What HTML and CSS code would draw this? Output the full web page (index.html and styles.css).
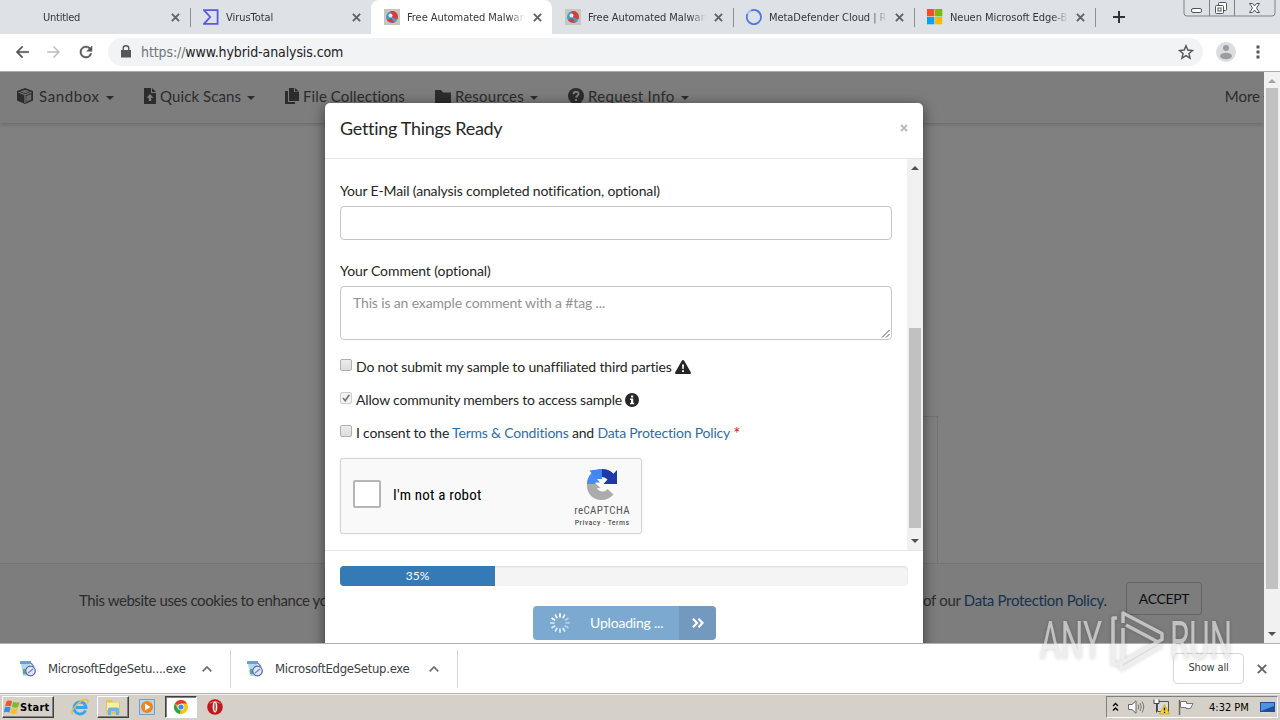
FILE: index.html
```html
<!DOCTYPE html>
<html lang="en">
<head>
  <meta charset="UTF-8">
  <title>Free Automated Malware Analysis Service</title>
  <link rel="stylesheet" href="styles.css">
</head>
<body>

  <!-- tabs -->
  <div class="tabstrip">
    <div class="tab blank">
      <span class="favicon"></span>
      <span class="tab-title">Untitled</span>
      <svg class="tab-close" viewBox="0 0 8 8"><path d="M.8.8l6.4 6.4M7.2.8L.8 7.2"/></svg>
    </div>
    <div class="tab sep">
      <svg class="favicon" viewBox="0 0 16 16"><path d="M1 1.2h13.6v13.6H1L7.2 8z" fill="none" stroke="#5a5ae0" stroke-width="1.8"/></svg>
      <span class="tab-title">VirusTotal</span>
      <svg class="tab-close" viewBox="0 0 8 8"><path d="M.8.8l6.4 6.4M7.2.8L.8 7.2"/></svg>
    </div>
    <div class="tab active">
      <svg class="favicon" viewBox="0 0 16 16"><use href="#ha"/></svg>
      <span class="tab-title">Free Automated Malware</span>
      <svg class="tab-close" viewBox="0 0 8 8"><path d="M.8.8l6.4 6.4M7.2.8L.8 7.2"/></svg>
    </div>
    <div class="tab">
      <svg class="favicon" viewBox="0 0 16 16"><use href="#ha"/></svg>
      <span class="tab-title">Free Automated Malware</span>
      <svg class="tab-close" viewBox="0 0 8 8"><path d="M.8.8l6.4 6.4M7.2.8L.8 7.2"/></svg>
    </div>
    <div class="tab sep">
      <svg class="favicon" viewBox="0 0 16 16"><path d="M5 1.6A7.1 7.1 0 1 1 1.5 5" fill="none" stroke="#4a78e0" stroke-width="1.8"/><path d="M1.5 5A7.1 7.1 0 0 1 5 1.6" fill="none" stroke="#9bb6ee" stroke-width="1.6"/></svg>
      <span class="tab-title">MetaDefender Cloud | Real</span>
      <svg class="tab-close" viewBox="0 0 8 8"><path d="M.8.8l6.4 6.4M7.2.8L.8 7.2"/></svg>
    </div>
    <div class="tab sep">
      <svg class="favicon" viewBox="0 0 16 16"><path fill="#f25022" d="M0 0h7.3v7.3H0z"/><path fill="#7fba00" d="M8 0h7.3v7.3H8z"/><path fill="#00a4ef" d="M0 8h7.3v7.3H0z"/><path fill="#ffb900" d="M8 8h7.3v7.3H8z"/></svg>
      <span class="tab-title">Neuen Microsoft Edge-Browser</span>
      <svg class="tab-close" viewBox="0 0 8 8"><path d="M.8.8l6.4 6.4M7.2.8L.8 7.2"/></svg>
    </div>
    <div class="newtab">
      <svg width="12" height="12" viewBox="0 0 12 12"><path d="M6 0v12M0 6h12" stroke="#2f3338" stroke-width="2"/></svg>
    </div>
    <svg class="winbtns" width="94" height="18" viewBox="0 0 94 18">
      <path d="M1 0v13q0 3 3 3h85q3 0 3-3V0M26.500 0v16M51.500 0v16" fill="none" stroke="#7d828a"/>
      <g fill="#fff" stroke="#50555c">
        <rect x="8.500" y="8.500" width="10" height="4" rx="1.500"/>
        <rect x="35.500" y="2.500" width="8" height="8" rx="1"/>
        <rect x="32.500" y="5.500" width="8" height="8" rx="1"/>
        <rect x="35" y="8" width="3" height="3"/>
        <path d="M66.500 3.500h3l2 2.500 2-2.500h3l-3 4.500 3 4.500h-3l-2-2.500-2 2.500h-3l3-4.500z"/>
      </g>
    </svg>
  </div>

  <!-- address bar -->
  <div class="toolbar">
    <svg class="nav-btn" viewBox="0 0 24 24"><path d="M21 11H7.800l5.600-5.600L12 4l-8 8 8 8 1.400-1.400L7.800 13H21z" fill="#54575b" stroke="#54575b" stroke-width=".5"/></svg>
    <svg class="nav-btn" viewBox="0 0 24 24"><path d="M3 11h13.200l-5.600-5.600L12 4l8 8-8 8-1.400-1.400 5.600-5.600H3z" fill="#bcbec1"/></svg>
    <svg class="nav-btn" viewBox="0 0 24 24"><path d="M17.600 6.400A8 8 0 1 0 19.700 14h-2.100A6 6 0 1 1 12 6c1.700 0 3.100.7 4.200 1.800L13 11h7V4z" fill="#54575b" stroke="#54575b" stroke-width=".7"/></svg>
    <div class="omnibox">
      <svg class="lock" width="10" height="13" viewBox="0 0 10 13"><path d="M0 5h10v7.500H0z" fill="#54575b"/><path d="M2.200 5.500V3.300a2.800 2.600 0 0 1 5.600 0v2.200" fill="none" stroke="#54575b" stroke-width="1.400"/></svg>
      <span class="url"><i>https://</i>www.hybrid-analysis.com</span>
      <svg class="star" width="16" height="16" viewBox="0 0 24 24"><path d="M12 2.500l2.700 6.600 7.100.6-5.400 4.600 1.700 7-6.100-3.800-6.100 3.800 1.700-7L2.200 9.700l7.100-.6z" fill="none" stroke="#54575b" stroke-width="2.100"/></svg>
    </div>
    <svg class="avatar" width="20" height="20" viewBox="0 0 20 20"><circle cx="10" cy="10" r="10" fill="#dcdddf"/><circle cx="10" cy="6" r="3" fill="#9c9da0"/><ellipse cx="10" cy="14" rx="6" ry="3.200" fill="#9c9da0"/></svg>
    <svg class="dots" width="4" height="14" viewBox="0 0 4 14"><path d="M.5.500h3v3h-3zM.5 5.500h3v3h-3zM.5 10.500h3v3h-3z" fill="#54575b"/></svg>
  </div>

  <div class="viewport">
    <div class="page">
      <nav class="site-nav">
        <a class="n1"><svg width="16" height="16" viewBox="0 0 16 16"><path d="M8 0l8 3v9.500L8 16l-8-3.500V3z" fill="#2c2c2c"/><path d="M1.500 4.200L8 6.700l6.500-2.500M8 6.700V15" stroke="#7a7a7a" fill="none" stroke-width="1.200"/><path d="M3 3.400L8 1.700l5 1.700-5 1.800zM9.300 8l4.900-2v5.800L9.300 14z" fill="#6a6a6a"/></svg><span>Sandbox</span><b class="caret"></b></a>
        <a class="n2"><svg width="12" height="16" viewBox="0 0 12 16"><path d="M0 0h7v5h5v11H0zM8 0l4 4H8z" fill="#2c2c2c"/><path d="M6 6l3.500 3.800H7.200V13H4.800V9.800H2.500z" fill="#7e7e7e"/></svg><span>Quick Scans</span><b class="caret"></b></a>
        <a class="n3"><svg width="14" height="16" viewBox="0 0 14 16"><path d="M4 0h5v4h5v9H4zM10 0l4 3.400h-4zM0 3h3v11h7v2H0z" fill="#2c2c2c"/></svg><span>File Collections</span></a>
        <a class="n4"><svg width="16" height="13" viewBox="0 0 16 13"><path d="M0 0h6l2 2.500h8V13H0z" fill="#2c2c2c"/></svg><span>Resources</span><b class="caret"></b></a>
        <a class="n5"><svg width="16" height="16" viewBox="0 0 16 16"><circle cx="8" cy="8" r="8" fill="#2c2c2c"/><path d="M5.500 6.200C5.600 2.800 10.700 3 10.500 6c-.1 1.700-2.300 1.800-2.400 3.600M8 11v2" stroke="#7e7e7e" stroke-width="1.900" fill="none"/></svg><span>Request Info</span><b class="caret"></b></a>
        <a class="more"><span>More</span><b class="caret"></b></a>
      </nav>
      <div class="site-main"><div class="panel"></div></div>
      <div class="cookies">
        <span class="ck1">This website uses cookies to enhance your</span>
        <span class="ck2">of our <a>Data Protection Policy</a>.</span>
        <span class="accept">ACCEPT</span>
      </div>

      <div class="modal">
        <div class="modal-header">
          <h4>Getting Things Ready</h4>
          <svg width="8" height="8" viewBox="0 0 8 8"><path d="M1 1l6 6M7 1L1 7" stroke="#bdbdbd" stroke-width="2"/></svg>
        </div>
        <div class="modal-body">
          <form class="form">
            <label class="l1">Your E-Mail (analysis completed notification, optional)</label>
            <div class="input"></div>
            <label class="l2">Your Comment (optional)</label>
            <div class="input textarea"><span>This is an example comment with a #tag ...</span>
              <svg width="9" height="9" viewBox="0 0 9 9"><path d="M1 8.500L8.500 1M5 8.500L8.500 5" stroke="#555"/></svg>
            </div>
            <div class="check"><i class="box"></i><span class="c1">Do not submit my sample to unaffiliated third parties</span>
              <svg class="warn" width="16" height="14" viewBox="0 0 16 14"><path d="M8 0q.8 0 1.200.8l6.600 11.400Q16.300 14 15 14H1q-1.300 0-.8-1.800L6.800.8Q7.200 0 8 0z" fill="#262626"/><path d="M7 4.500h2L8.700 9H7.300zM7 10.300h2V12H7z" fill="#fff"/></svg>
            </div>
            <div class="check"><i class="box on"><svg width="8" height="8" viewBox="0 0 8 8"><path d="M1 4l2.200 2.700L7.300.8" stroke="#777" stroke-width="1.700" fill="none"/></svg></i><span class="c2">Allow community members to access sample</span>
              <svg class="info" width="14" height="14" viewBox="0 0 14 14"><circle cx="7" cy="7" r="7" fill="#262626"/><path d="M6 2.500h2.200v2H6zM5 5.600h3.200v4.200h1v1.500H5V9.800h1V7H5z" fill="#fff"/></svg>
            </div>
            <div class="check"><i class="box"></i><span class="c3">I consent to the <a>Terms &amp; Conditions</a> and <a>Data Protection Policy</a> <em>*</em></span></div>
            <div class="captcha">
              <i class="captcha-box"></i>
              <span class="robot">I'm not a robot</span>
              <div class="captcha-logo">
                <svg width="32" height="32" viewBox="0 0 32 32">
                  <path d="M1 16C1 8 7 1 16 1v8q-3 0-5 2l3 3.500H9.500V16z" fill="#4a8af4"/>
                  <path d="M3.500 2.500L16 1v10H10z" fill="#4285f4"/>
                  <path d="M16 1c5 0 9 2 11.500 4.800L31 2v14H17.500l4-4.500Q19.500 9 16 9z" fill="#1c3aa9"/>
                  <path d="M1 16v2c0 8 6.500 14 14.500 14 5 0 9-2 12-5.500l-6-5.500c-3 4-9.500 3-10.500-1h3.500L10 16z" fill="#ababab"/>
                </svg>
                <span class="rc">reCAPTCHA</span>
                <span class="pt">Privacy - Terms</span>
              </div>
            </div>
          </form>
          <div class="scroll inner"><b class="up"></b><b class="thumb"></b><b class="down"></b></div>
        </div>
        <div class="modal-footer">
          <div class="progress"><div class="bar" style="width:155px"><span>35%</span></div></div>
          <div class="upload">
            <div class="upload-main">
              <svg width="20" height="20" viewBox="-10 -10 20 20" stroke="#fff" stroke-width="1.700">
                <path d="M0-5.500V-9.800M2.800-4.800L4.900-8.500M-2.800-4.800L-4.900-8.500M-4.800-2.800L-8.500-4.900"/>
                <path d="M-5.500 0H-9.800M-4.800 2.800L-8.500 4.900M-2.800 4.800L-4.900 8.500M0 5.500V9.800M2.800 4.800L4.900 8.500" opacity=".8"/>
                <path d="M4.800-2.800L8.500-4.900M5.500 0H9.800M4.800 2.800L8.500 4.900" opacity=".5"/>
              </svg>
              <span>Uploading ...</span>
            </div>
            <div class="upload-next"><svg width="12" height="10" viewBox="0 0 12 10"><path d="M1 .8L5 5 1 9.200M6.500.8l4 4.200-4 4.200" stroke="#fff" stroke-width="2.200" fill="none"/></svg></div>
          </div>
        </div>
      </div>
    </div>
    <div class="scroll outer"><b class="up"></b><b class="thumb"></b><b class="down"></b></div>
  </div>

  <!-- downloads -->
  <div class="downloads">
    <div class="dl d1"><svg width="18" height="18" viewBox="0 0 18 18"><use href="#setup"/></svg><span>MicrosoftEdgeSetu....exe</span><svg class="chev" width="10" height="6" viewBox="0 0 10 6"><path d="M.7 5.300L5 1l4.300 4.300" stroke="#6b6f74" stroke-width="1.700" fill="none"/></svg></div>
    <div class="dl d2"><svg width="18" height="18" viewBox="0 0 18 18"><use href="#setup"/></svg><span>MicrosoftEdgeSetup.exe</span><svg class="chev" width="10" height="6" viewBox="0 0 10 6"><path d="M.7 5.300L5 1l4.300 4.300" stroke="#6b6f74" stroke-width="1.700" fill="none"/></svg></div>
    <div class="showall"><span>Show all</span></div>
    <svg class="dl-close" width="10" height="10" viewBox="0 0 10 10"><path d="M.8.800l8.400 8.400M9.200.800L.8 9.200" stroke="#5f6368" stroke-width="1.800"/></svg>
  </div>

  <!-- taskbar -->
  <div class="taskbar">
    <div class="start">
      <svg width="16" height="16" viewBox="0 0 16 16"><path d="M2.500 2.500Q5 .5 8 2.300L6.800 7.500Q4 6 1 7.500z" fill="#e8582a"/><path d="M9 2.700q3 1.500 6.500.300L14 8.300q-3 1.200-6.200-.5z" fill="#7db928"/><path d="M.8 8.500Q4 7 6.600 8.500L5.400 13.500Q2.500 12-.2 13.500z" fill="#3c8de0"/><path d="M7.600 8.900q3 1.500 6.200.400l-1.400 5q-3 1.200-6-.4z" fill="#fbbf1f"/></svg>
      <span>Start</span>
    </div>
    <svg class="ie" width="18" height="18" viewBox="0 0 18 18"><path d="M14.500 12.500A6 6 0 1 1 15 9.500H5" fill="none" stroke="#39a5e6" stroke-width="2.800"/><path d="M1.500 16C-1 12 11-1 16.500 2c1 .8.500 2-.2 3.300" fill="none" stroke="#edbd3b" stroke-width="1.400"/></svg>
    <div class="task raised"><svg width="18" height="18" viewBox="0 0 18 18"><path d="M2 2h6l1.500 2H16v12H2z" fill="#e6c552"/><path d="M3 4.500h12V12H3z" fill="#fbeeaa"/><path d="M4 17v-6q0-1.500 1.500-1.500h8Q15 9.500 15 11v6h-3v-4H7v4z" fill="#69b5e6"/></svg></div>
    <svg class="wmp" width="16" height="16" viewBox="0 0 16 16"><path d="M.5.500h15v15H.5z" fill="#b9d7f0" stroke="#6aa0cf"/><circle cx="8" cy="8" r="6" fill="#f08518"/><path d="M6 4.500L11.500 8 6 11.500z" fill="#fff"/></svg>
    <div class="task pressed"><svg width="14" height="14" viewBox="0 0 14 14"><circle cx="7" cy="7" r="7" fill="#f9c513"/><path d="M7 7L.9 3.500A7 7 0 0 1 13.100 3.500H7z" fill="#e23b2e"/><path d="M7 7l-1 7A7 7 0 0 1 .9 3.500L4 9z" fill="#2ba24c"/><circle cx="7" cy="7" r="3.300" fill="#fff"/><circle cx="7" cy="7" r="2.600" fill="#4285f4"/></svg></div>
    <svg class="opera" width="16" height="16" viewBox="0 0 16 16"><circle cx="8" cy="8" r="7.800" fill="#c3161c"/><path d="M2 5a7 6 0 0 1 12 0q-6-3-12 0z" fill="#e56a6a"/><ellipse cx="8" cy="8" rx="2.400" ry="5.500" fill="#f4f0f0"/><ellipse cx="8" cy="8" rx=".7" ry="4.200" fill="#a03034"/></svg>
    <div class="tray">
      <svg width="7" height="10" viewBox="0 0 7 10"><path d="M1 4l2.500-2.500L6 4M1 8.500L3.500 6 6 8.500" stroke="#000" stroke-width="1.400" fill="none"/></svg>
      <svg class="vol" width="17" height="14" viewBox="0 0 17 14"><path d="M.5 4.500H4L8 .800v12.400L4 9.500H.5z" fill="#fff" stroke="#666"/><path d="M10 4.500q1.500 2.500 0 5M12 3q2.500 4 0 8M14 1.500q3.500 5.500 0 11" stroke="#777" fill="none"/></svg>
      <svg class="net" width="17" height="16" viewBox="0 0 17 16"><path d="M4.500 2.500h11v10h-11z" fill="#d8dcdc" stroke="#555"/><path d="M1 .5v4h5v-4M3.500 4.500v9" stroke="#444" fill="#fff"/><path d="M11.500 5.500L16.500 15h-10z" fill="#ffd91c" stroke="#b89600" stroke-width=".6"/><path d="M11.500 8.500v3M11.500 12.700V14" stroke="#222" stroke-width="1.400"/></svg>
      <svg class="flag" width="16" height="15" viewBox="0 0 16 15"><path d="M1.500 0v15" stroke="#666" stroke-width="1.400"/><path d="M2.500 1.500h6v2h6.500L12.500 8.500H8v-1H2.500z" fill="#fff" stroke="#777"/></svg>
      <span>4:32 PM</span>
      <svg class="desk" width="15" height="13" viewBox="0 0 15 13"><path d="M0 1h15v10H0z" fill="#1c4f9e"/><path d="M1 2h13v3L1 10z" fill="#4f92dd"/><path d="M2 11h9v1.500H2z" fill="#d9d9d9"/></svg>
    </div>
  </div>

  <svg class="watermark" width="200" height="70" viewBox="0 0 200 70">
    <g class="wm-text"><text x="4" y="51" textLength="62" lengthAdjust="spacingAndGlyphs">ANY</text><text x="134" y="51" textLength="62" lengthAdjust="spacingAndGlyphs">RUN</text></g>
    <path d="M81 10h-4v46h6M87 15V5l39 20.500v6L87 54V20M90 17l32 17M85 53v8l41-24" class="wm-line"/>
  </svg>

  <svg class="defs">
    <symbol id="ha" viewBox="0 0 16 16"><path d="M0 0h16v16H0z" fill="#c9c6c0"/><circle cx="8" cy="8" r="6" fill="#3f9fcb"/><path d="M7 2a6 6 0 0 1 6.500 8Q9 10 6 5z" fill="#dd3a35"/><path d="M3 11q3 3.500 7.500 2.500L7 9z" fill="#d93a40"/><circle cx="6.500" cy="6.500" r="2" fill="#d8f0fa"/></symbol>
    <symbol id="setup" viewBox="0 0 18 18"><path d="M1 1h11v3H1z" fill="#6f9fcb"/><path d="M2 4h9l1 12H4z" fill="#b5d5ec"/><path d="M4 9h5v5H4z" fill="#5fa88a"/><circle cx="11.500" cy="11" r="4.800" fill="#dfe5f5" stroke="#5468a8" stroke-width="1.200"/><path d="M9 13l5-4M12 3l3 4" stroke="#6f86c8" stroke-width="1.300"/></symbol>
  </svg>
</body>
</html>
```
FILE: styles.css
```css
* {
  box-sizing: border-box;
}

body {
  margin: 0;
  width: 1280px;
  height: 720px;
  overflow: hidden;
  position: relative;
  display: flex;
  flex-direction: column;
  font-family: "DejaVu Sans Condensed", "DejaVu Sans", sans-serif;
  font-stretch: condensed;
  background: #fff;
}

svg {
  flex: none;
}

.defs {
  display: none;
}

span, label {
  white-space: nowrap;
}

/* tab strip */
.tabstrip {
  height: 34px;
  flex: none;
  background: #dee1e6;
  display: flex;
  padding-left: 9px;
}

.tab {
  width: 181px;
  height: 34px;
  flex: none;
  display: flex;
  align-items: center;
  padding-left: 13px;
  position: relative;
}

.tab.active {
  background: #fff;
  border-radius: 8px 8px 0 0;
}

.tab.sep::before,
.newtab::before {
  content: "";
  position: absolute;
  left: 0;
  top: 8px;
  width: 1px;
  height: 19px;
  background: #8b8f96;
}

.favicon {
  width: 16px;
  height: 16px;
  flex: none;
}

.tab-title {
  margin-left: 7px;
  width: 118px;
  overflow: hidden;
  font-size: 11px;
  letter-spacing: -0.05px;
  color: #33363a;
  -webkit-mask-image: linear-gradient(to right, #000 102px, transparent 118px);
}

.blank .tab-title {
  margin-left: 5px;
  width: 120px;
  letter-spacing: -0.25px;
}

.tab-close {
  width: 9px;
  height: 9px;
  margin-left: 8px;
  fill: none;
  stroke: #5f6368;
  stroke-width: 1.7;
}

.newtab {
  position: relative;
  width: 40px;
  display: flex;
  align-items: center;
  padding-left: 18px;
}

.winbtns {
  margin-left: auto;
  margin-right: 3px;
}

/* toolbar */
.toolbar {
  height: 38px;
  flex: none;
  display: flex;
  align-items: center;
  padding: 0 20px 2px 13px;
  border-bottom: 1px solid #aaa;
}

.nav-btn {
  width: 18px;
  height: 18px;
  margin-right: 14px;
}

.omnibox {
  width: 1095px;
  height: 28px;
  margin-left: -1px;
  border-radius: 14px;
  background: #f1f3f4;
  display: flex;
  align-items: center;
  padding: 0 9px 0 13px;
}

.url {
  margin-left: 10px;
  font-size: 14px;
  letter-spacing: -0.1px;
  color: #202124;
}

.url i {
  font-style: normal;
  color: #70757a;
}

.star {
  margin-left: auto;
}

.avatar {
  margin-left: 13px;
}

.dots {
  margin-left: auto;
}

/* page */
.viewport {
  height: 571px;
  flex: none;
  display: flex;
}

.page {
  width: 1264px;
  position: relative;
  overflow: hidden;
  background: #808080;
  font-family: Lato, sans-serif;
  display: flex;
  flex-direction: column;
}

.site-nav {
  height: 51px;
  flex: none;
  display: flex;
  background: #7d7d7d;
  box-shadow: 0 1px 4px rgba(0, 0, 0, 0.22);
  padding-left: 17px;
  font-size: 15px;
  color: #2c2c2c;
}

.site-nav a {
  display: flex;
  align-items: center;
  height: 48px;
  flex: none;
}

.n1 { width: 127px; }
.n2 { width: 141px; }
.n3 { width: 150px; }
.n4 { width: 133px; }
.n1 span { margin-left: 6px; letter-spacing: 0.6px; }
.n2 span { margin-left: 4px; letter-spacing: 0.1px; }
.n3 span { margin-left: 4px; letter-spacing: 0.1px; }
.n4 span { margin-left: 4px; letter-spacing: 0.25px; }
.n5 span { margin-left: 4px; letter-spacing: 0.3px; }

.site-nav .more {
  margin-left: auto;
  margin-right: -7px;
}

.caret {
  border: 4px solid transparent;
  border-top-color: #2c2c2c;
  border-bottom: 0;
  margin: 3px 0 0 6px;
}

.more .caret {
  margin-left: 3px;
}

.site-main {
  height: 440px;
  flex: none;
  padding: 293px 0 0 325px;
}

.panel {
  width: 613px;
  height: 147px;
  border: 1px solid #727272;
  border-bottom: 0;
}

.cookies {
  height: 80px;
  flex: none;
  border-top: 1px solid #737373;
  background: #7d7d7d;
  display: flex;
  align-items: center;
  padding: 0 62px 7px 79px;
  font-size: 15px;
  letter-spacing: -0.35px;
  color: #2c2c2c;
}

.ck1 {
  width: 844px;
  letter-spacing: -0.42px;
}

.ck2 {
  letter-spacing: -0.31px;
}

.cookies a {
  color: #16324c;
}

.accept {
  margin: -4px 0 0 auto;
  width: 76px;
  height: 33px;
  border: 1px solid #636363;
  border-radius: 3px;
  text-align: center;
  font-size: 14px;
  line-height: 31px;
  color: #0c0c0c;
}

/* modal */
.modal {
  position: absolute;
  left: 325px;
  top: 31px;
  width: 598px;
  height: 560px;
  background: #fff;
  border-radius: 5px;
  box-shadow: 0 3px 14px rgba(0, 0, 0, 0.55);
  color: #262626;
}

.modal-header {
  height: 56px;
  border-bottom: 1px solid #e5e5e5;
  display: flex;
  justify-content: space-between;
  align-items: center;
  padding: 0 15px 5px;
}

.modal-header h4 {
  margin: 0;
  font-size: 18px;
  font-weight: 400;
  letter-spacing: -0.3px;
}

.modal-body {
  height: 391px;
  display: flex;
}

.form {
  width: 582px;
  padding: 21px 15px 0;
  font-size: 14px;
  letter-spacing: -0.15px;
}

.form label {
  display: block;
  height: 26px;
  line-height: 22px;
}

.form .l2 {
  letter-spacing: -0.07px;
}

.input {
  height: 34px;
  border: 1px solid #c6c6c6;
  border-radius: 4px;
  margin-bottom: 20px;
}

.textarea {
  height: 54px;
  padding: 6px 12px;
  line-height: 20px;
  color: #929292;
  position: relative;
  margin-bottom: 17px;
}

.textarea svg {
  position: absolute;
  right: 1px;
  bottom: 1px;
}

.check {
  height: 20px;
  line-height: 20px;
  margin-bottom: 13px;
  display: flex;
  align-items: center;
}

.check span {
  margin-left: 4px;
}

.c2 {
  letter-spacing: -0.18px;
}

.c3 {
  letter-spacing: -0.2px;
}

.check svg {
  margin-left: 3px;
}

.box {
  width: 12px;
  height: 12px;
  flex: none;
  margin-top: -4px;
  border: 1px solid #b0b0b0;
  border-radius: 2px;
  background: linear-gradient(#ececec, #dcdcdc);
}

.box.on {
  border-color: #cdcdcd;
  background: #f3f3f3;
  line-height: 0;
}

.box.on svg {
  margin: 1px;
}

.check a {
  color: #2f6da5;
}

.check em {
  font-style: normal;
  font-size: 17px;
  line-height: 10px;
  vertical-align: -2px;
  color: #d9212c;
}

.captcha {
  width: 302px;
  height: 76px;
  margin-top: 15px;
  border: 1px solid #d3d3d3;
  border-radius: 3px;
  background: #f9f9f9;
  box-shadow: 0 0 3px rgba(0, 0, 0, 0.08);
  display: flex;
  align-items: center;
  padding: 0 11px 0 12px;
  font-family: Roboto, sans-serif;
}

.captcha-box {
  width: 28px;
  height: 28px;
  border: 2px solid #b5b5b5;
  border-radius: 2px;
  background: #fff;
  margin-top: -4px;
}

.robot {
  margin: -2px 0 0 12px;
  font-size: 15px;
  letter-spacing: 0.2px;
  color: #000;
}

.captcha-logo {
  margin-left: auto;
  padding-top: 4px;
  display: flex;
  flex-direction: column;
  align-items: center;
  color: #555;
}

.rc {
  font-size: 11px;
  line-height: 13px;
  letter-spacing: 0.4px;
  margin-top: 4px;
}

.pt {
  font-size: 8px;
  line-height: 12px;
  letter-spacing: 0.45px;
  color: #333;
}

.modal-footer {
  border-top: 1px solid #e5e5e5;
  padding: 15px 15px 0;
}

.progress {
  height: 20px;
  border-radius: 4px;
  background: #f4f4f4;
  box-shadow: inset 0 1px 2px rgba(0, 0, 0, 0.1);
  overflow: hidden;
}

.bar {
  height: 20px;
  background: #337ab7;
  color: #fff;
  font-size: 12px;
  line-height: 20px;
  text-align: center;
}

.upload {
  width: 183px;
  height: 34px;
  margin: 20px 0 0 193px;
  display: flex;
  border-radius: 4px;
  overflow: hidden;
  color: #fff;
  font-size: 14px;
}

.upload-main {
  width: 146px;
  background: #7ba9d0;
  display: flex;
  align-items: center;
  padding-left: 17px;
}

.upload-main span {
  margin: -2px 0 0 20px;
  letter-spacing: -0.2px;
}

.upload-next {
  width: 37px;
  background: #7399be;
  display: flex;
  align-items: center;
  justify-content: center;
}

/* scrollbars */
.scroll {
  width: 16px;
  background: #f1f1f1;
  display: flex;
  flex-direction: column;
  align-items: center;
}

.up {
  border: 4px solid transparent;
  border-top: 0;
  border-bottom-color: #505050;
}

.down {
  border: 4px solid transparent;
  border-bottom: 0;
  border-top-color: #505050;
  margin-top: auto;
}

.thumb {
  width: 12px;
  background: #c1c1c1;
}

.outer .up {
  margin-top: 7px;
  border-bottom-color: #a3a3a3;
}

.outer .thumb {
  height: 501px;
  margin-top: 5px;
}

.outer .down {
  margin-bottom: 7px;
}

.inner .up {
  margin-top: 7px;
}

.inner .thumb {
  height: 200px;
  margin-top: 158px;
}

.inner .down {
  margin-bottom: 7px;
}

/* downloads */
.downloads {
  height: 50px;
  flex: none;
  display: flex;
  align-items: center;
  border-top: 1px solid #b0b0b0;
  padding-right: 13px;
  font-size: 13px;
  letter-spacing: -0.3px;
  color: #3c4043;
}

.dl {
  height: 38px;
  display: flex;
  align-items: center;
  border-right: 1px solid #d5d5d5;
  padding-left: 19px;
}

.d1 { width: 231px; }
.d2 { width: 227px; padding-left: 15px; }

.dl span {
  margin-left: 11px;
}

.chev {
  margin-left: auto;
  margin-right: 18px;
}

.showall {
  margin-left: auto;
  width: 71px;
  height: 31px;
  border: 1px solid #d8d8d8;
  border-radius: 4px;
  text-align: center;
  line-height: 28px;
  font-size: 11px;
  letter-spacing: -0.15px;
}

.dl-close {
  margin-left: 13px;
}

/* taskbar */
.taskbar {
  height: 27px;
  flex: none;
  background: #d5d0c8;
  border-top: 1px solid #b5b5b5;
  box-shadow: inset 0 1px #f2f0ec;
  display: flex;
  align-items: center;
  padding-left: 2px;
}

.start,
.raised {
  border: 1px solid;
  border-color: #fff #404040 #404040 #fff;
  box-shadow: inset -1px -1px #808080;
}

.start {
  width: 52px;
  height: 22px;
  display: flex;
  align-items: center;
  padding-left: 1px;
  font-size: 11px;
  font-weight: 700;
  letter-spacing: 0.3px;
  color: #000;
}

.ie { margin-left: 17px; }

.task {
  width: 32px;
  height: 22px;
  display: flex;
  align-items: center;
  justify-content: center;
}

.raised { margin-left: 8px; }
.wmp { margin-left: 10px; }

.pressed {
  margin-left: 10px;
  background: #fff;
  border: 1px solid;
  border-color: #404040 #fff #fff #404040;
  box-shadow: inset 1px 1px #808080;
}

.opera { margin-left: 10px; }

.tray {
  margin-left: auto;
  margin-right: 2px;
  width: 172px;
  height: 22px;
  border: 1px solid;
  border-color: #808080 #fff #fff #808080;
  display: flex;
  align-items: center;
  padding: 0 2px 0 5px;
  font-size: 11px;
  color: #000;
}

.vol { margin-left: 9px; }
.net { margin-left: 8px; }
.flag { margin-left: 8px; }
.tray span { margin-left: 15px; }
.desk { margin-left: auto; }

/* watermark */
.watermark {
  position: absolute;
  left: 1036px;
  top: 608px;
  filter: drop-shadow(0 0 2px rgba(0, 0, 0, 0.3));
  opacity: 0.66;
}

.wm-text {
  font: 400 53px Roboto, sans-serif;
  fill: #e6e6e6;
}

.wm-line {
  fill: none;
  stroke: #e6e6e6;
  stroke-width: 3.5;
  stroke-linejoin: round;
}
```
